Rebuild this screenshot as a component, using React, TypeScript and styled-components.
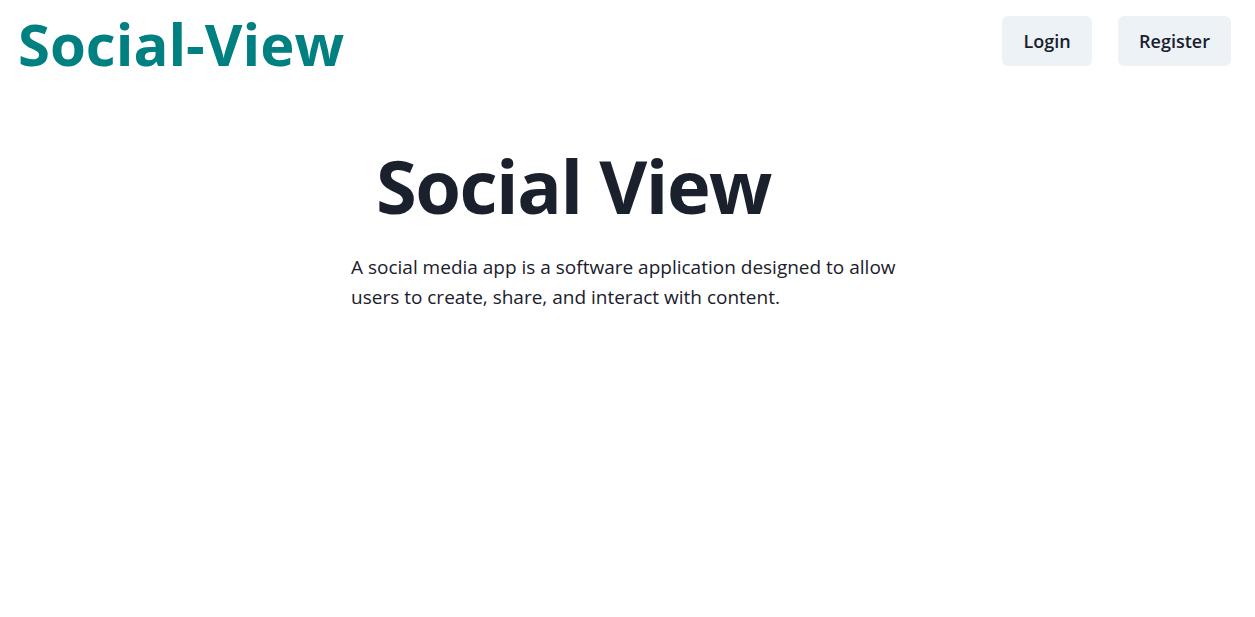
import React from "react";
import styled, { createGlobalStyle } from "styled-components";

const Global = createGlobalStyle`
  html, body { margin: 0; padding: 0; background: #ffffff; }
  body { font-family: "Open Sans", "Noto Sans", sans-serif; color: #1A202C; }
  * { box-sizing: border-box; }
`;

const Page = styled.div`
  display: flex;
  flex-direction: column;
  min-height: 617px;
`;

const Header = styled.header`
  display: flex;
  justify-content: space-between;
  align-items: flex-start;
  padding: 6px 24px 0 18px;
`;

const Logo = styled.h1`
  margin: 0;
  font-size: 58px;
  line-height: 76px;
  font-weight: 700;
  color: #008080;
`;

const Nav = styled.nav`
  display: flex;
  gap: 26px;
  padding-top: 10px;
`;

const NavButton = styled.button<{ $w: number }>`
  width: ${(p) => p.$w}px;
  height: 50px;
  border: none;
  border-radius: 6px;
  background: #EDF2F7;
  color: #1A202C;
  font-family: inherit;
  font-size: 18px;
  font-weight: 600;
  cursor: pointer;
`;

const Hero = styled.main`
  width: 551px;
  margin: 54px auto 0 351px;
  display: flex;
  flex-direction: column;
`;

const Title = styled.h2`
  margin: 0 0 0 25px;
  font-size: 74px;
  line-height: 100px;
  font-weight: 700;
  letter-spacing: -1.5px;
  color: #1A202C;
`;

const Lead = styled.p`
  margin: 16px 0 0;
  font-size: 19px;
  line-height: 30px;
  color: #1A202C;
`;

export default function App() {
  return (
    <>
      <Global />
      <Page>
        <Header>
          <Logo>Social-View</Logo>
          <Nav>
            <NavButton $w={90}>Login</NavButton>
            <NavButton $w={113}>Register</NavButton>
          </Nav>
        </Header>
        <Hero>
          <Title>Social View</Title>
          <Lead>
            A social media app is a software application designed to allow users to create, share, and interact with content.
          </Lead>
        </Hero>
      </Page>
    </>
  );
}
